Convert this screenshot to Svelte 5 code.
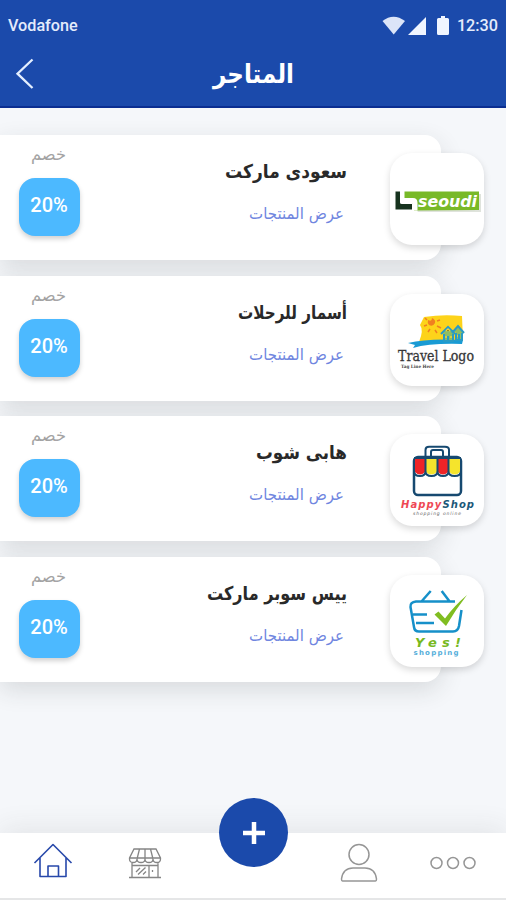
<script>
    // Stores listed on the page
    let stores = [
        { name: "سعودى ماركت", discount: "20%", logo: "seoudi", width: 122 },
        { name: "أسمار للرحلات", discount: "20%", logo: "travel", width: 109 },
        { name: "هابى شوب", discount: "20%", logo: "happy", width: 91 },
        { name: "ييس سوبر ماركت", discount: "20%", logo: "yes", width: 140 },
    ];
</script>

<div class="screen">
    <header>
        <div class="status">
            <span>Vodafone</span>
            <div class="status-right">
                <svg class="wifi" width="24" height="19" viewBox="0 0 24 19">
                    <path d="M.5 5Q11.5-3.500 23 5L11.700 18.500Z" fill="#dce5f8" />
                </svg>
                <svg class="signal" width="18" height="18" viewBox="0 0 18 18">
                    <path d="M18 0V18H0Z" fill="#f0f5ff" />
                </svg>
                <svg class="battery" width="12" height="19" viewBox="0 0 12 19">
                    <path d="M4 0H8V2H10.500Q12 2 12 3.500V17.500Q12 19 10.500 19H1.500Q0 19 0 17.500V3.500Q0 2 1.500 2H4Z" fill="#f0f5ff" />
                </svg>
                <span>12:30</span>
            </div>
        </div>
        <div class="bar">
            <svg class="back" width="18" height="32" viewBox="0 0 18 32">
                <path d="M16.500 1.500L1.500 15.700L16.500 30" fill="none" stroke="#e4efff" stroke-width="2.300" />
            </svg>
            <h1>
                <svg width="84" height="44" viewBox="0 0 84 44">
                    <text x="82" y="31" direction="rtl" textLength="81" lengthAdjust="spacingAndGlyphs">المتاجر</text>
                </svg>
            </h1>
        </div>
    </header>

    <main>
        {#each stores as store}
            <article class="card">
                <div class="discount">
                    <svg width="40" height="26" viewBox="0 0 40 26">
                        <text x="37" y="17" direction="rtl" textLength="35" lengthAdjust="spacingAndGlyphs">خصم</text>
                    </svg>
                    <div class="badge">{store.discount}</div>
                </div>
                <div class="info">
                    <svg class="name" width="160" height="36" viewBox="0 0 160 36">
                        <text x="160" y="22" direction="rtl" textLength={store.width} lengthAdjust="spacingAndGlyphs">{store.name}</text>
                    </svg>
                    <svg class="link" width="160" height="30" viewBox="0 0 160 30">
                        <text x="157" y="19" direction="rtl" textLength="95" lengthAdjust="spacingAndGlyphs">عرض المنتجات</text>
                    </svg>
                </div>
                <div class="logo">
                    <svg width="94" height="92" viewBox="0 0 94 92">
                        {#if store.logo === "seoudi"}
                            <path d="M16 41H91V59H28Z" fill="#dfe3dc" />
                            <path d="M14 38.500H89V57L24 57.500V50L14 46Z" fill="#78b928" />
                            <path d="M12 38V46Q12 47.500 14 47.500H23Q25 47.500 25 50V57.500" fill="none" stroke="#fff" stroke-width="5" />
                            <path d="M5.500 38.500H10V49.500Q10 51 12 51H22V56.500H5.500Z" fill="#17331f" />
                            <text x="28" y="54" class="seoudi" textLength="59" lengthAdjust="spacingAndGlyphs">seoudi</text>
                        {:else if store.logo === "travel"}
                            <path d="M34 23Q53 20 72 22L73 47L29 48Q34 36 30 31Z" fill="#fdd31a" />
                            <path d="M38 26Q42 28 42 24Q46 26 45 29Q43 33 39 31Q37 29 38 26Z" fill="#f08020" />
                            <path d="M35 24L37 26M34 32L37 31M38 38L40 35M45 36L47 39M47 32L51 34M47 27L50 26" stroke="#f08020" stroke-width="1.500" />
                            <path d="M18 49Q38 44 73 46L72 50Q40 49 23 54L25 51Z" fill="#199bd4" />
                            <path d="M53 40L58 34L64 40V47H54V40ZM64 37L69 32L73 38V46H66V39" fill="#8fbd64" />
                            <path d="M51 40L58 33L65 40M62 39L68 32L74 39M54 40V47H63V40M66 39V46H72V39M58 47V42M69 45V40" fill="none" stroke="#299bc5" stroke-width="2" />
                            <path d="M56 37L58 35L60 37M55 43H57M60 43H62M67 42H68" stroke="#f2d534" stroke-width="1.500" />
                            <text x="8" y="67" class="travel" textLength="76" lengthAdjust="spacingAndGlyphs">Travel Logo</text>
                            <text x="11" y="73.500" class="tag" textLength="33" lengthAdjust="spacingAndGlyphs">Tag Line Here</text>
                        {:else if store.logo === "happy"}
                            <path d="M35.500 23V16Q35.500 12.800 39 12.800H55Q59 12.800 59 16V23M41 23V18Q41 16 43 16H51Q53 16 53 18V23" fill="none" stroke="#164970" stroke-width="2" />
                            <rect x="24" y="23" width="47" height="38" rx="4" fill="#fff" stroke="#164970" stroke-width="2.500" />
                            <path d="M25 24H35V38Q30 43 25 38Z" fill="#ee2427" />
                            <path d="M36 24H47V38Q41 43 36 38Z" fill="#f5e42c" />
                            <path d="M48 24H58V38Q53 43 48 38Z" fill="#ee2427" />
                            <path d="M59 24H70V38Q65 43 59 38Z" fill="#f5e42c" />
                            <path d="M24 37Q24 42 30 42Q35.500 42 35.500 37Q35.500 42 41.500 42Q47.500 42 47.500 37Q47.500 42 53 42Q58.500 42 58.500 37Q58.500 42 64.500 42Q71 42 71 37M35.500 24V38M47.500 24V38M58.500 24V38M24 24H71" fill="none" stroke="#164970" stroke-width="2" />
                            <text x="11" y="73.500" class="happy" textLength="73" lengthAdjust="spacing">Happy<tspan fill="#1c5879">Shop</tspan></text>
                            <text x="23" y="81" class="happy-sub" textLength="48" lengthAdjust="spacing">shopping online</text>
                        {:else}
                            <path d="M31 27L40.700 16M51.700 16L60 27M65 26.500H26Q20 27 20.500 32L24 52Q24.500 56.500 29 56.500H63Q68 56.500 69 51L71.500 35M23 39.500H37M26 48H44" fill="none" stroke="#1690c9" stroke-width="2.500" stroke-linejoin="round" />
                            <path d="M44.500 39.500L48.500 36.500L55 43.500Q64 31 77 20Q66 34 56 51Z" fill="#80bd21" />
                            <text x="25" y="71.500" class="yes" textLength="46" lengthAdjust="spacing">Yes!</text>
                            <text x="23.500" y="80" class="yes-sub" textLength="45" lengthAdjust="spacing">shopping</text>
                        {/if}
                    </svg>
                </div>
            </article>
        {/each}
    </main>

    <nav>
        <button class="home" aria-label="home">
            <svg width="40" height="38" viewBox="0 0 40 38" fill="none" stroke="#2748aa" stroke-width="1.600">
                <path d="M1.500 22L20 3.500L38.500 22M7 17V35.500H33V17M15 35V25H25.500V35" stroke-linejoin="round" />
            </svg>
        </button>
        <button aria-label="stores">
            <svg width="34" height="32" viewBox="0 0 34 32" fill="none" stroke="#858585" stroke-width="1.300">
                <path d="M6 2H28L32.500 11V12Q32.500 15.500 29 15.500Q25 15.500 25 12Q25 15.500 21 15.500Q17 15.500 17 12Q17 15.500 13 15.500Q9 15.500 9 12Q9 15.500 5 15.500Q1.500 15.500 1.500 12V11ZM1.500 11H32.500M9 12L11.500 2M17 12V2M25 12L22.500 2M4 16V30M30 16V30M1 30.500H33M4 18.500H30M21 30V18.500M8 25L12 21M10 27.500L17.500 20.500M15 27.500L18 24.500M24.500 23V25" />
            </svg>
        </button>
        <button class="add" aria-label="add">
            <svg width="24" height="24" viewBox="0 0 24 24">
                <path d="M12 1V23M1 12H23" stroke="#fff" stroke-width="4.500" />
            </svg>
        </button>
        <button aria-label="profile">
            <svg width="38" height="40" viewBox="0 0 38 40" fill="none" stroke="#969696" stroke-width="1.500">
                <circle cx="19" cy="11.500" r="10" />
                <path d="M2.500 38Q1.500 38 1.500 36Q3 25 13 25H25Q35 25 36.500 36Q36.500 38 35.500 38Z" />
            </svg>
        </button>
        <button class="more" aria-label="more">
            <svg width="46" height="14" viewBox="0 0 46 14" fill="none" stroke="#969696" stroke-width="1.500">
                <circle cx="6.500" cy="7" r="5.500" />
                <circle cx="23" cy="7" r="5.500" />
                <circle cx="39.500" cy="7" r="5.500" />
            </svg>
        </button>
    </nav>
</div>

<style>
    :global(body) {
        margin: 0;
        background: #f5f7fa;
    }

    .screen {
        width: 506px;
        height: 900px;
        display: flex;
        flex-direction: column;
        overflow: hidden;
        background: #f5f7fa;
        font-family: Roboto, "DejaVu Sans", sans-serif;
    }

    svg {
        display: block;
        flex: none;
        overflow: visible;
    }

    svg text {
        font-family: "DejaVu Sans", sans-serif;
    }

    header {
        height: 108px;
        box-sizing: border-box;
        background: #1b4aab;
        border-bottom: 2px solid #0b2e91;
        color: #e4ecfc;
    }

    .status {
        height: 51px;
        padding: 0 8px;
        display: flex;
        justify-content: space-between;
        align-items: center;
        font-size: 16.2px;
        font-weight: 500;
    }

    .status-right {
        display: flex;
        align-items: center;
    }

    .signal {
        margin-left: 2px;
    }

    .battery {
        margin: 0 8px 0 11px;
    }

    .bar {
        display: flex;
        align-items: center;
        height: 46px;
        padding-left: 16px;
    }

    h1 {
        margin: 0 0 0 178px;
    }

    h1 text {
        font-size: 26px;
        font-weight: bold;
        fill: #fff;
    }

    main {
        flex: 1;
        padding-top: 27px;
    }

    .card {
        position: relative;
        width: 441px;
        height: 125px;
        margin-bottom: 15.6px;
        display: flex;
        background: #fff;
        border-radius: 0 16px 16px 0;
        box-shadow: 0 8px 24px rgba(45, 50, 50, 0.14);
    }

    .discount {
        width: 98px;
        padding-top: 8px;
        display: flex;
        flex-direction: column;
        align-items: center;
    }

    .discount text {
        font-size: 17px;
        fill: #a3a3a3;
    }

    .badge {
        width: 61px;
        height: 58px;
        margin-top: 9px;
        border-radius: 16px;
        background: #4cb9ff;
        box-shadow: 0 3px 5px rgba(0, 0, 0, 0.18);
        color: #fff;
        font-size: 20px;
        font-weight: 500;
        line-height: 55px;
        text-align: center;
    }

    .info {
        width: 249px;
        padding-top: 21px;
        display: flex;
        flex-direction: column;
        align-items: flex-end;
    }

    .name text {
        font-size: 19px;
        font-weight: bold;
        fill: #292929;
    }

    .link {
        margin-top: 8px;
    }

    .link text {
        font-size: 16px;
        fill: #7086df;
    }

    /* the logo hangs over the right edge of the card */
    .logo {
        position: absolute;
        top: 18px;
        right: -43px;
        width: 94px;
        height: 92px;
        border-radius: 22px;
        background: #fff;
        box-shadow: 0 3px 7px rgba(0, 0, 0, 0.15);
    }

    .logo .seoudi {
        font: italic bold 16px "DejaVu Sans", sans-serif;
        fill: #fff;
    }

    .logo .travel {
        font: 15px "DejaVu Serif", serif;
        fill: #363638;
        stroke: #363638;
        stroke-width: 0.3px;
    }

    .logo .tag {
        font: bold 4.5px "DejaVu Serif", serif;
        fill: #444;
    }

    .logo .happy {
        font: italic bold 10px "DejaVu Sans", sans-serif;
        fill: #ee4855;
    }

    .logo .happy-sub {
        font: italic 4.5px "DejaVu Sans", sans-serif;
        fill: #666;
    }

    .logo .yes {
        font: italic bold 13px "DejaVu Sans", sans-serif;
        fill: #78b91f;
    }

    .logo .yes-sub {
        font: bold 7px "DejaVu Sans", sans-serif;
        fill: #55aeda;
    }

    nav {
        height: 67px;
        box-sizing: border-box;
        display: grid;
        grid-template-columns: 106px 77px 141px 69px 113px;
        align-items: center;
        justify-items: center;
        padding-bottom: 6px;
        background: #fff;
        border-bottom: 2px solid #e5e6e7;
        box-shadow: 0 -5px 28px rgba(50, 60, 60, 0.09);
    }

    button {
        padding: 0;
        border: none;
        background: none;
        cursor: pointer;
    }

    .home {
        margin-top: -5px;
    }

    .add {
        width: 69px;
        height: 69px;
        margin-top: -60px;
        display: flex;
        align-items: center;
        justify-content: center;
        border-radius: 50%;
        background: #1b4aab;
    }

    .more {
        margin-left: 7px;
    }
</style>
